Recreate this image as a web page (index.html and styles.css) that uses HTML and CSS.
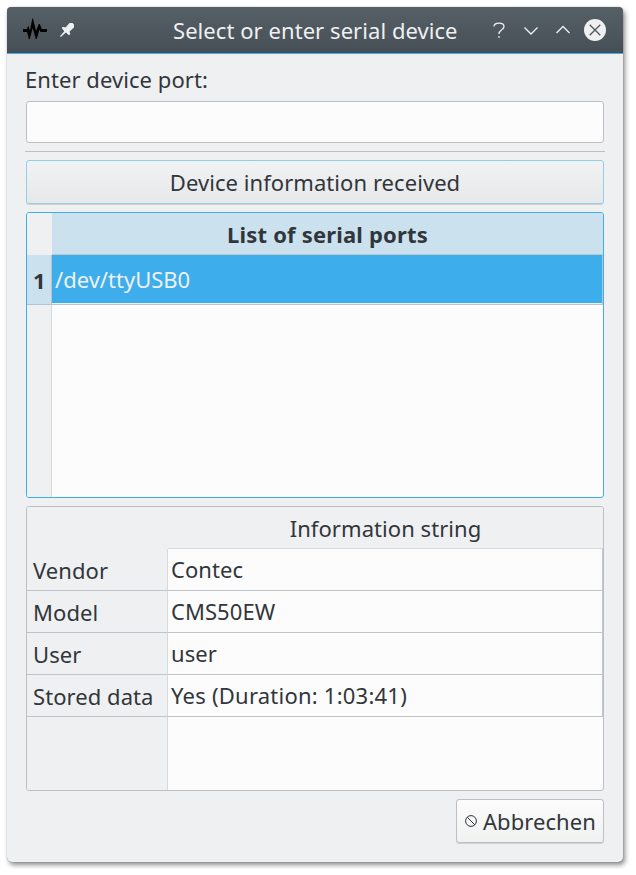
FILE: index.html
```
<!DOCTYPE html>
<html lang="en">
<head>
<meta charset="utf-8">
<title>Select or enter serial device</title>
<link rel="stylesheet" href="styles.css">
</head>
<body>
<main class="window">
  <header class="titlebar">
    <svg class="app-icon" width="24" height="24" viewBox="0 0 24 24"><path d="M0 11H4L5.300 7.500L7 12.500L9.300 .5H10L13 13L15.800 6H16.800L18.800 11H24V14H17.500L16.400 11.500L13.800 21H12.800L9.700 10L6.800 21H5.800L4 14H0Z"/></svg>
    <svg class="pin-icon" width="16" height="16" viewBox="0 0 16 16"><path d="M10.500 1H13.500L15 2.500V5.500L10.500 9.500L11.300 12L10 13.200L6.800 10.500L1.800 15L1 14.200L5.300 9.200L2.700 6L4 4.800L6.500 5.500Z" fill="#eff0f1"/></svg>
    <h1 class="title">Select or enter serial device</h1>
    <svg class="controls" width="116" height="24" viewBox="0 0 116 24" fill="none" stroke="#eff0f1" stroke-width="1.3">
      <path d="M3 8.500C3 4 13 4 13 8.500C13 12 8 11.500 8 16M8 18V19.700"/>
      <path d="M33.500 9.500L40 16L46.500 9.500M65.500 15L72 8.500L78.500 15"/>
      <circle cx="104" cy="12" r="11" fill="#eff0f1" stroke="none"/>
      <path d="M98.700 6.700L109.300 17.300M109.300 6.700L98.700 17.300" stroke="#4d565d"/>
    </svg>
  </header>
  <div class="content">
    <label class="label" for="port">Enter device port:</label>
    <input class="port" id="port" type="text">
    <hr class="rule">
    <button class="button received">Device information received</button>
    <section class="table ports">
      <div class="corner"></div>
      <div class="head">List of serial ports</div>
      <div class="row-head">1</div>
      <div class="cell">/dev/ttyUSB0</div>
      <div class="side"></div>
      <div class="blank"></div>
    </section>
    <section class="table info">
      <div class="corner"></div><div class="head">Information string</div>
      <div class="row-head">Vendor</div><div class="cell">Contec</div>
      <div class="row-head">Model</div><div class="cell">CMS50EW</div>
      <div class="row-head">User</div><div class="cell">user</div>
      <div class="row-head">Stored data</div><div class="cell duration">Yes (Duration: 1:03:41)</div>
      <div class="side"></div><div class="blank"></div>
    </section>
    <button class="button cancel"><svg width="12" height="12" viewBox="0 0 12 12" fill="none" stroke="#31363b"><circle cx="6" cy="6" r="5.400"/><path d="M2.200 2.200L9.800 9.800"/></svg>Abbrechen</button>
  </div>
</main>
</body>
</html>
```
FILE: styles.css
```
* { box-sizing: border-box; }
body {
  margin: 0;
  padding: 7px;
  background: #fff;
  color: #31363b;
  font: 22px/30px "Noto Sans", sans-serif;
  letter-spacing: .06px;
}
.window {
  width: 616px;
  height: 855px;
  border-radius: 5px;
  background: #eff0f1;
  box-shadow: 0 0 1px rgba(0, 0, 0, .45), 2px 3px 5px rgba(0, 0, 0, .45);
}
.titlebar {
  display: flex;
  align-items: center;
  height: 47px;
  padding: 0 16px;
  border-bottom: 1px solid #3daee9;
  border-radius: 4px 4px 0 0;
  background: linear-gradient(#566067, #474f56);
  color: #eff0f1;
}
.app-icon, .pin-icon, .controls { flex: none; }
.pin-icon { margin-left: 12px; }
.title {
  flex: 1;
  margin: 0 0 0 98px;
  font-size: 22px;
  font-weight: 400;
  white-space: nowrap;
}
.content {
  display: flex;
  flex-direction: column;
  padding: 10px 19px 0;
}
.label { height: 37px; margin-left: -1px; }
.port {
  width: 578px;
  height: 42px;
  border: 1px solid #bdbfc0;
  border-radius: 3px;
  background: #fcfcfc;
  font: inherit;
}
.rule {
  width: 580px;
  height: 1px;
  margin: 8px -1px;
  border: 0;
  background: #bdbfc1;
}
.button {
  height: 44px;
  padding: 0;
  border: 1px solid #bdbfc0;
  border-radius: 3px;
  background: linear-gradient(#fcfcfc, #f0f1f1);
  box-shadow: 0 1px 0 rgba(0, 0, 0, .12);
  color: inherit;
  font: inherit;
  letter-spacing: inherit;
}
.received {
  border-color: #93cee9;
  background: linear-gradient(#f1f2f3, #e7e8e9);
}
.table {
  display: grid;
  width: 578px;
  margin-top: 8px;
  overflow: hidden;
  border: 1px solid #bdbfc0;
  border-radius: 3px;
  background: #fcfcfc;
}
.ports {
  grid-template: 42px 50px 1fr / 25px 1fr;
  height: 286px;
  border-color: #3daee9;
}
.info {
  grid-template: 42px 42px 42px 42px 42px 1fr / 141px 1fr;
  height: 285px;
}
.corner, .side, .info .head, .row-head { background: #eff0f1; }
.head { padding-top: 6px; border-bottom: 1px solid #d7d9da; text-align: center; }
.ports .head { background: #cbe2ee; border-color: #bdc8ce; font-weight: 700; letter-spacing: .18px; }
.row-head { padding: 6px 0 0 6px; border-right: 1px solid #d7d9da; border-bottom: 1px solid #c0c4c8; }
.cell { padding: 5px 0 0 3px; border-right: 1px solid #c0c4c8; border-bottom: 1px solid #c0c4c8; }
.duration { letter-spacing: .23px; }
.ports .row-head { padding: 10px 0 0 6px; background: #cbe2ee; border-color: #b4c5d0; font-weight: 700; }
.ports .cell {
  padding-top: 9px;
  background: #3daeeb;
  color: #eff0f1;
  box-shadow: inset 0 -1px #e8f3f9;
  letter-spacing: 0;
}
.side { border-right: 1px solid #d7d9da; }
.cancel {
  display: flex;
  align-self: flex-end;
  align-items: center;
  width: 148px;
  margin-top: 8px;
  padding-left: 8px;
  gap: 6px;
}
```
